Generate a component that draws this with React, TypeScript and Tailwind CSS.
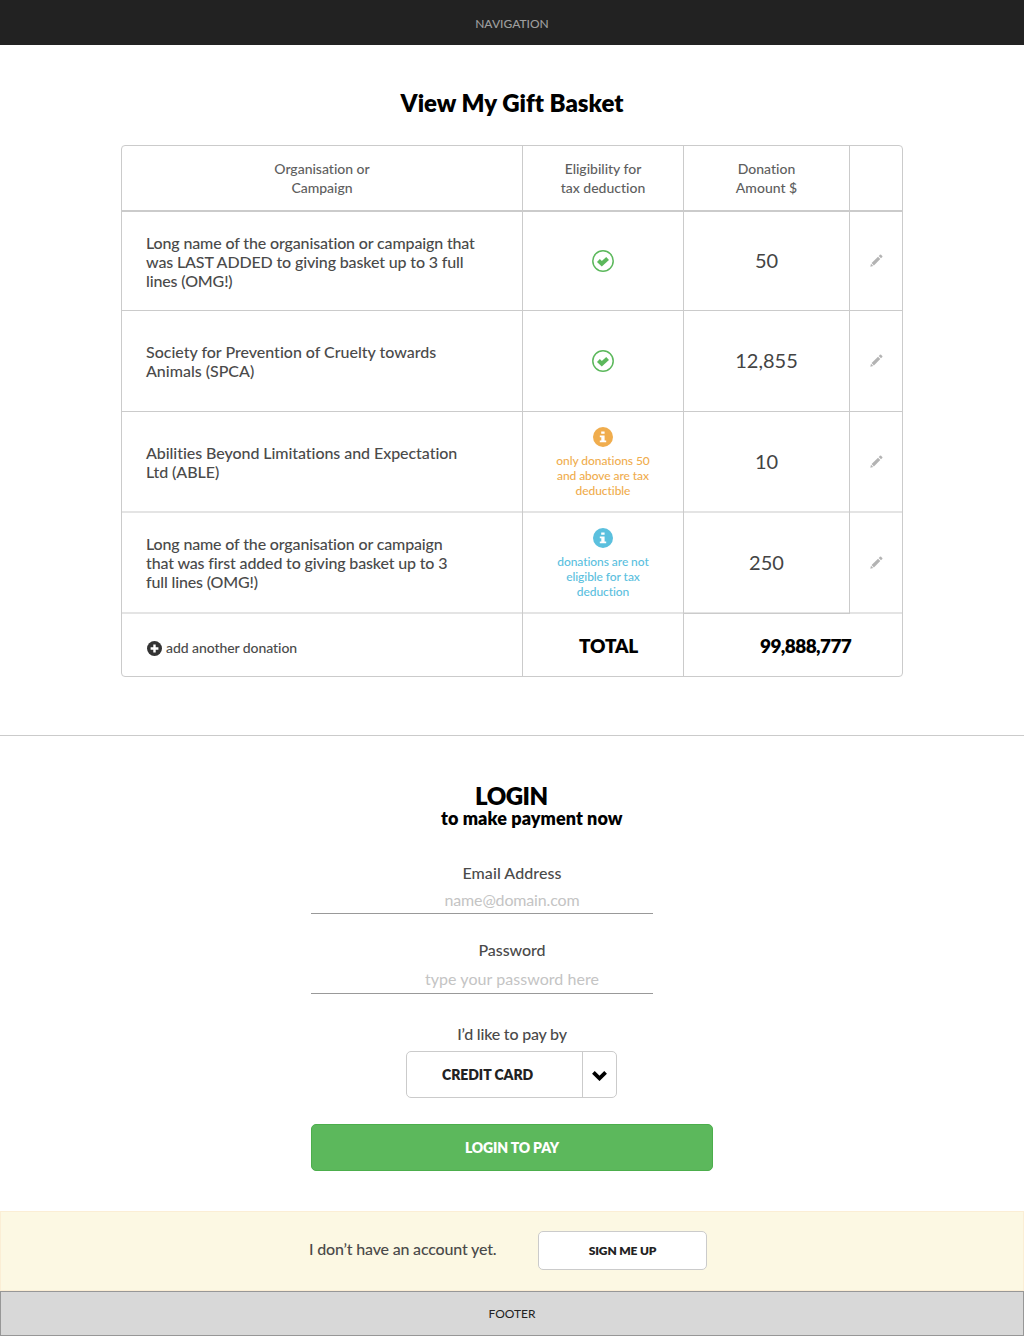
import type { ReactNode } from 'react';

const CheckIcon = () => (
  <svg className="mb-px size-[22px]" viewBox="0 0 22 22">
    <circle cx="11" cy="11" r="10.2" fill="none" stroke="#5cb85c" strokeWidth="1.5" />
    <path d="M6.4 10.6 L9.8 13.8 L15.6 8.5" fill="none" stroke="#5cb85c" strokeWidth="4.1" />
  </svg>
);

const InfoIcon = () => (
  <svg className="size-5" viewBox="0 0 20 20">
    <circle cx="10" cy="10" r="10" fill="currentColor" />
    <path
      d="M8.2 4.6h3.4v2.2H8.2z M6.8 8.4h4.8v5h1.6v1.8H6.8v-1.8h1.5v-3.2H6.8z"
      fill="#fff"
    />
  </svg>
);

const PencilIcon = () => (
  <svg className="size-[13px]" viewBox="0 0 13 13" fill="#b3b3b3">
    <path d="M0.3 12.7 L1 9.7 L3.3 12 Z" />
    <path d="M1.6 9.1 L8 2.7 L10.3 5 L3.9 11.4 Z" />
    <path d="M8.7 2 L10 0.7 Q10.5 0.3 11 0.7 L12.3 2 Q12.7 2.5 12.3 3 L11 4.3 Z" />
  </svg>
);

const PlusIcon = () => (
  <svg className="size-[15px]" viewBox="0 0 15 15">
    <circle cx="7.5" cy="7.5" r="7.5" fill="#333" />
    <path d="M7.5 3.6v7.8M3.6 7.5h7.8" stroke="#fff" strokeWidth="2.4" />
  </svg>
);

const ChevronIcon = () => (
  <svg className="h-[11px] w-[15px]" viewBox="0 0 15 11">
    <path d="M1.4 2.4 L7.5 8.4 L13.6 2.4" fill="none" stroke="#000" strokeWidth="3.8" />
  </svg>
);

const cols = 'grid grid-cols-[401px_161px_166px_52px]';
const cell = 'border-r border-[#cbcbcb] flex items-center justify-center';

type Item = { lines: string[]; status: ReactNode; amount: string; row: string; text: string; num: string };

const Note = ({ lines, color }: { lines: string[]; color: string }) => (
  <div className={`flex h-full flex-col items-center pt-[15px] ${color}`}>
    <InfoIcon />
    <div className="mt-1.5 text-center text-xs leading-[15px] font-medium tracking-[-0.07px]">
      {lines.map((l) => (
        <div key={l}>{l}</div>
      ))}
    </div>
  </div>
);

const items: Item[] = [
  {
    lines: [
      'Long name of the organisation or campaign that',
      'was LAST ADDED to giving basket up to 3 full',
      'lines (OMG!)',
    ],
    status: <CheckIcon />,
    amount: '50',
    row: 'h-[99px] shadow-[inset_0_-1px_0_#cbcbcb]',
    text: 'tracking-[-0.14px]',
    num: 'pb-1',
  },
  {
    lines: ['Society for Prevention of Cruelty towards', 'Animals (SPCA)'],
    status: <CheckIcon />,
    amount: '12,855',
    row: 'h-[101px] shadow-[inset_0_-1px_0_#cbcbcb]',
    text: 'pb-0.5 tracking-[-0.01px]',
    num: 'pb-1',
  },
  {
    lines: ['Abilities Beyond Limitations and Expectation', 'Ltd (ABLE)'],
    status: (
      <Note color="text-[#f0ad4e]" lines={['only donations 50', 'and above are tax', 'deductible']} />
    ),
    amount: '10',
    row: 'h-[101px] shadow-[inset_0_-2px_0_#e4e4e4]',
    text: 'pb-0.5 tracking-[-0.06px]',
    num: 'pb-1',
  },
  {
    lines: [
      'Long name of the organisation or campaign',
      'that was first added to giving basket up to 3',
      'full lines (OMG!)',
    ],
    status: (
      <Note color="text-[#5bc0de]" lines={['donations are not', 'eligible for tax', 'deduction']} />
    ),
    amount: '250',
    row: 'h-[101px] shadow-[inset_0_-2px_0_#e4e4e4]',
    text: 'pb-0.5 tracking-[-0.15px]',
    num: 'border-b pb-0.5',
  },
];

export default function App() {
  return (
    <div className="flex h-[1337px] w-[1024px] flex-col bg-white font-['Lato',sans-serif] font-medium text-[#4a4a4a]">
      <nav className="h-[45px] bg-[#222] pt-4 text-center text-xs leading-[15px] text-[#9d9d9d]">
        NAVIGATION
      </nav>

      <section className="h-[690px] pt-[43px]">
        <h1 className="text-center text-2xl leading-[30px] font-extrabold tracking-[0.01px] text-black">
          View My Gift Basket
        </h1>
        <div className="mx-auto mt-[27px] w-[782px] rounded-[4px] border border-[#cbcbcb]">
          <div className={`${cols} h-[66px] border-b-2 border-[#cbcbcb] text-center text-sm leading-[19px] tracking-[-0.01px] text-[#5e5e5e]`}>
            <div className={cell}>Organisation or<br />Campaign</div>
            <div className={cell}>Eligibility for<br />tax deduction</div>
            <div className={cell}>Donation<br />Amount $</div>
            <div />
          </div>
          {items.map((it) => (
            <div key={it.amount} className={`${cols} ${it.row}`}>
              <div className={`flex flex-col justify-center border-r border-[#cbcbcb] pl-6 text-base leading-[19px] whitespace-nowrap ${it.text}`}>
                {it.lines.map((l) => (
                  <div key={l}>{l}</div>
                ))}
              </div>
              <div className={cell}>{it.status}</div>
              <div className={`${cell} text-xl font-normal text-[#444] ${it.num}`}>{it.amount}</div>
              <div className="flex items-center justify-center pb-[3px]">
                <PencilIcon />
              </div>
            </div>
          ))}
          <div className="grid h-[62px] grid-cols-[401px_161px_218px]">
            <div className="flex items-center gap-1 border-r border-[#cbcbcb] pt-[7px] pl-[25px] text-sm tracking-[-0.07px]">
              <PlusIcon />
              <span className="pb-px">add another donation</span>
            </div>
            <div className="border-r border-[#cbcbcb] pt-5 pl-14 text-[19px] leading-6 font-extrabold tracking-[-0.2px] text-black">
              TOTAL
            </div>
            <div className="pt-5 pl-[76px] text-[19px] leading-6 font-extrabold tracking-[-0.6px] text-black">
              99,888,777
            </div>
          </div>
        </div>
      </section>

      <section className="flex h-[476px] flex-col border-t border-[#cbcbcb]">
        <h2 className="pt-12 pl-[475px] text-2xl leading-6 font-extrabold tracking-[-0.5px] text-black">
          LOGIN
        </h2>
        <p className="pl-[441px] text-lg leading-5 font-extrabold tracking-[0.08px] text-black">
          to make payment now
        </p>
        <div className="mt-[35px] text-center text-base leading-5 tracking-[0.08px]">Email Address</div>
        <div className="mt-1.5 ml-[311px] h-[25px] w-[342px] border-b border-[#999]">
          <div className="w-[402px] pt-px text-center text-base leading-5 font-normal tracking-[-0.16px] text-[#c4c4c4]">
            name@domain.com
          </div>
        </div>
        <div className="mt-[26px] text-center text-base leading-5 tracking-[-0.05px]">Password</div>
        <div className="mt-[9px] ml-[311px] h-[25px] w-[342px] border-b border-[#999]">
          <div className="w-[402px] text-center text-base leading-5 font-normal tracking-[0.05px] text-[#c4c4c4]">
            type your password here
          </div>
        </div>
        <div className="mt-[30px] text-center text-base leading-5 tracking-[-0.2px]">I’d like to pay by</div>
        <button className="mt-[7px] ml-[406px] flex h-[47px] w-[211px] shrink-0 rounded-[5px] border border-[#cbcbcb]">
          <span className="flex h-full w-[175px] items-center pl-[35px] text-sm font-extrabold tracking-[-0.05px] text-[#222]">
            CREDIT CARD
          </span>
          <span className="flex h-full flex-1 items-center justify-center border-l border-[#cbcbcb] pt-0.5">
            <ChevronIcon />
          </span>
        </button>
        <button className="mt-[26px] ml-[311px] h-[47px] w-[402px] shrink-0 rounded-[5px] border border-[#4cae4c] bg-[#5cb85c] text-sm font-extrabold tracking-[-0.15px] text-white">
          LOGIN TO PAY
        </button>
      </section>

      <section className="flex h-20 border border-[#fbeed5] bg-[#fcf8e3] pt-[19px] pl-[308px]">
        <p className="w-[229px] pt-2 text-base leading-5 tracking-[-0.18px]">I don’t have an account yet.</p>
        <button className="h-[39px] w-[169px] rounded-[5px] border border-[#cbcbcb] bg-white text-xs font-extrabold tracking-[-0.15px] text-[#222]">
          SIGN ME UP
        </button>
      </section>
      <footer className="h-[45px] border border-[#979797] bg-[#d8d8d8] pt-[14px] text-center text-xs leading-[15px] font-normal text-[#222]">
        FOOTER
      </footer>
    </div>
  );
}
